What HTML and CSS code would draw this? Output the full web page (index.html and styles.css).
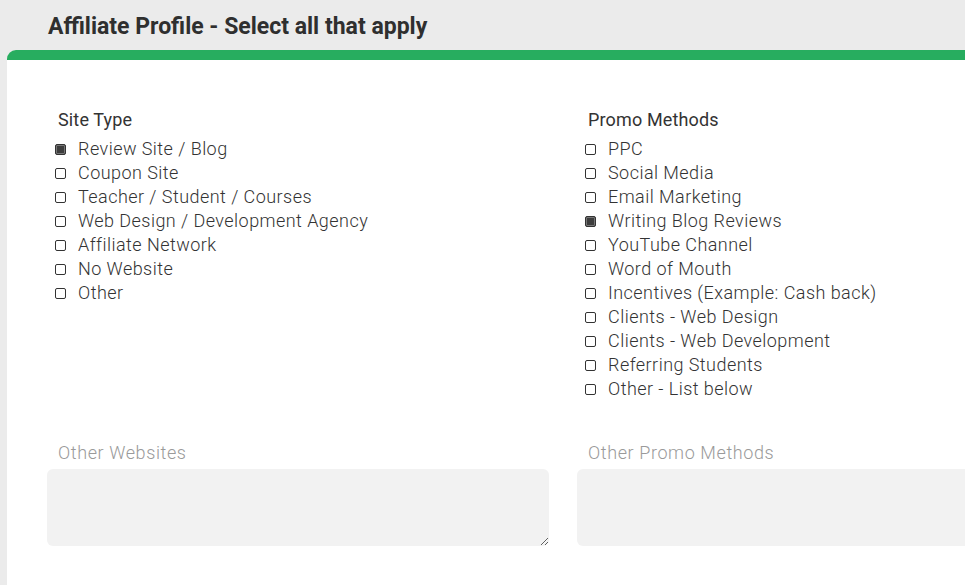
FILE: index.html
```html
<!DOCTYPE html>
<html>
<head>
  <meta charset="UTF-8">
  <title>Affiliate Profile</title>
  <link rel="stylesheet" href="styles.css">
</head>
<body>
  <h1 class="page-title">Affiliate Profile - Select all that apply</h1>

  <div class="card">
    <div class="profile-grid">
      <div class="check-group">
        <div class="group-title">Site Type</div>
        <label class="check-row"><input type="checkbox" checked> Review Site / Blog</label>
        <label class="check-row"><input type="checkbox"> Coupon Site</label>
        <label class="check-row"><input type="checkbox"> Teacher / Student / Courses</label>
        <label class="check-row"><input type="checkbox"> Web Design / Development Agency</label>
        <label class="check-row"><input type="checkbox"> Affiliate Network</label>
        <label class="check-row"><input type="checkbox"> No Website</label>
        <label class="check-row"><input type="checkbox"> Other</label>
      </div>

      <div class="check-group">
        <div class="group-title">Promo Methods</div>
        <label class="check-row"><input type="checkbox"> PPC</label>
        <label class="check-row"><input type="checkbox"> Social Media</label>
        <label class="check-row"><input type="checkbox"> Email Marketing</label>
        <label class="check-row"><input type="checkbox" checked> Writing Blog Reviews</label>
        <label class="check-row"><input type="checkbox"> YouTube Channel</label>
        <label class="check-row"><input type="checkbox"> Word of Mouth</label>
        <label class="check-row"><input type="checkbox"> Incentives (Example: Cash back)</label>
        <label class="check-row"><input type="checkbox"> Clients - Web Design</label>
        <label class="check-row"><input type="checkbox"> Clients - Web Development</label>
        <label class="check-row"><input type="checkbox"> Referring Students</label>
        <label class="check-row"><input type="checkbox"> Other - List below</label>
      </div>

      <div class="text-field">
        <label class="field-label" for="other-sites">Other Websites</label>
        <textarea id="other-sites"></textarea>
      </div>

      <div class="text-field">
        <label class="field-label" for="other-promo">Other Promo Methods</label>
        <textarea id="other-promo"></textarea>
      </div>
    </div>
  </div>
</body>
</html>
```

FILE: styles.css
```css
:root {
  --green: #27ad5f;
  --page-bg: #ebebeb;
  --text: #333333;
  --muted: #9a9a9a;
  --field-bg: #f2f2f2;
}

* {
  margin: 0;
  padding: 0;
  box-sizing: border-box;
}

body {
  background: var(--page-bg);
  font-family: Roboto, 'Noto Sans', sans-serif;
  color: var(--text);
  overflow: hidden;
  height: 585px;
}

.page-title {
  height: 50px;
  padding: 12px 0 0 48px;
  font-size: 23px;
  font-weight: 700;
  letter-spacing: 0;
  line-height: 30px;
  color: #2f2f2f;
}

.card {
  margin-left: 7px;
  width: 1120px;
  height: 600px;
  background: #fff;
  border-top: 10px solid var(--green);
  border-top-left-radius: 9px;
  padding: 48px 0 0 40px;
}

.profile-grid {
  display: grid;
  grid-template-columns: 502px 502px;
  column-gap: 28px;
  row-gap: 40px;
}

.group-title {
  padding-left: 11px;
  font-size: 18px;
  line-height: 24px;
  margin-bottom: 5px;
  letter-spacing: 0.15px;
}

.check-row {
  display: flex;
  align-items: center;
  gap: 12px;
  padding-left: 8px;
  font-size: 18px;
  line-height: 24px;
  font-weight: 300;
  letter-spacing: 0.45px;
  color: #333;
}

.check-row input {
  appearance: none;
  -webkit-appearance: none;
  width: 11px;
  height: 11px;
  border: 1px solid #333;
  border-radius: 2px;
  background: #fff;
  flex-shrink: 0;
}

.check-row input:checked {
  background: #3d3d3d;
  box-shadow: inset 0 0 0 1px #777;
}

.field-label {
  display: block;
  padding-left: 11px;
  font-size: 18px;
  line-height: 24px;
  font-weight: 300;
  letter-spacing: 0.6px;
  color: var(--muted);
  margin-bottom: 4px;
}

.text-field textarea {
  display: block;
  width: 502px;
  height: 77px;
  border: none;
  border-radius: 6px;
  background: var(--field-bg);
  font-family: inherit;
  font-size: 15px;
  padding: 8px 10px;
}
```
